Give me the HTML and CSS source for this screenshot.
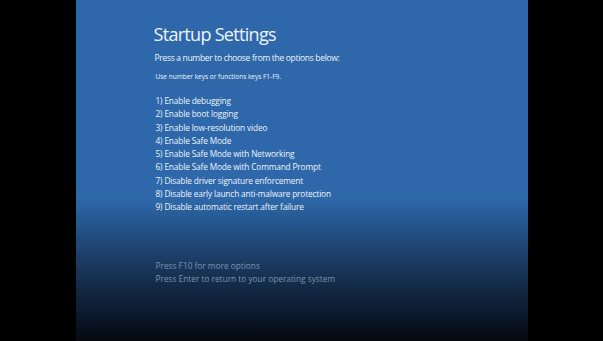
FILE: index.html
```html
<!DOCTYPE html>
<html lang="en">
<head>
<meta charset="utf-8">
<title>Startup Settings</title>
<link rel="stylesheet" href="styles.css">
</head>
<body>
<div class="screen">
  <main class="panel">
    <h1 class="title">Startup Settings</h1>
    <p class="prompt">Press a number to choose from the options below:</p>
    <p class="hint">Use number keys or functions keys F1-F9.</p>
    <ol class="options">
      <li>1) Enable debugging</li>
      <li>2) Enable boot logging</li>
      <li>3) Enable low-resolution video</li>
      <li>4) Enable Safe Mode</li>
      <li>5) Enable Safe Mode with Networking</li>
      <li>6) Enable Safe Mode with Command Prompt</li>
      <li>7) Disable driver signature enforcement</li>
      <li>8) Disable early launch anti-malware protection</li>
      <li>9) Disable automatic restart after failure</li>
    </ol>
    <div class="footer">
      <p>Press F10 for more options</p>
      <p>Press Enter to return to your operating system</p>
    </div>
  </main>
</div>
</body>
</html>
```
FILE: styles.css
```css
html, body {
  margin: 0;
  padding: 0;
  background: #000;
}
.screen {
  width: 603px;
  height: 341px;
  display: flex;
  justify-content: center;
  background: #000;
  font-family: "Open Sans", "Noto Sans", sans-serif;
  color: #eef3fa;
}
.panel {
  width: 452px;
  height: 341px;
  box-sizing: border-box;
  padding: 22px 0 0 78px;
  background: linear-gradient(to bottom,
    #2e68aa 0%,
    #2e68aa 58%,
    #25558c 66%,
    #1b3c64 76%,
    #11263f 86%,
    #0a1526 94%,
    #05080f 100%);
}
.title {
  margin: 0;
  font-size: 18px;
  line-height: 24px;
  font-weight: 400;
  letter-spacing: -0.7px;
}
.prompt {
  margin: 6px 0 0 1px;
  font-size: 8.5px;
  line-height: 12px;
  letter-spacing: -0.32px;
}
.hint {
  margin: 8px 0 0 2px;
  font-size: 6.5px;
  line-height: 10px;
}
.options {
  list-style: none;
  margin: 12px 0 0 2px;
  padding: 0;
  font-size: 8.3px;
  line-height: 13.3px;
  letter-spacing: -0.15px;
}
.footer {
  margin: 45px 0 0 2px;
  font-size: 8.3px;
  line-height: 13px;
  color: #7d93ae;
}
.footer p {
  margin: 0;
}
```
